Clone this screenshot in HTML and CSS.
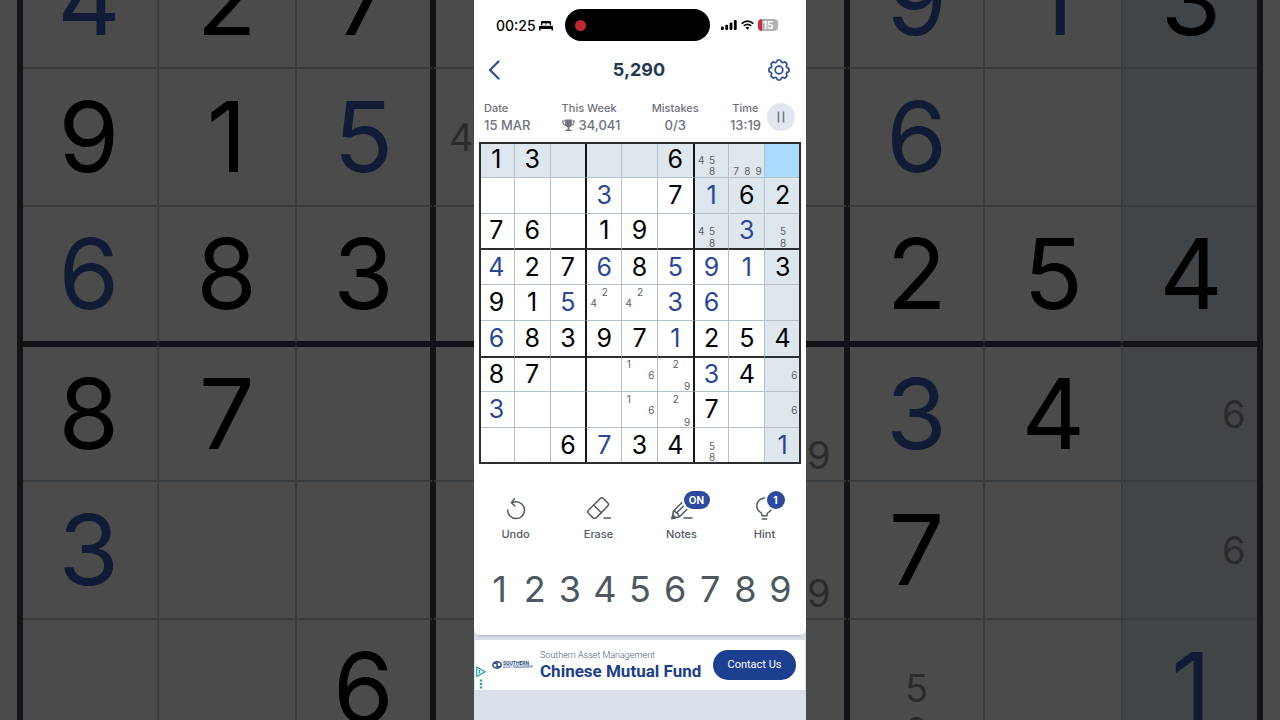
FILE: index.html
```html
<!DOCTYPE html>
<html lang="en">
<head>
    <meta charset="UTF-8">
    <meta name="viewport" content="width=device-width, initial-scale=1.0">
    <title>Sudoku</title>
    <link rel="stylesheet" href="styles.css">
</head>
<body>
    <div class="backdrop" aria-hidden="true">
        <div class="board board-dim" id="backdrop-board"></div>
    </div>

    <main class="phone">
        <div class="screen">
            <div class="status-bar">
                <div class="clock">
                    <span>00:25</span>
                    <svg width="14" height="11" viewBox="0 0 14 11">
                        <path d="M2 5V2.200Q2 1 3.200 1h7.600Q12 1 12 2.200V5h-1.300V4q0-.8-.8-.8H8q-.7 0-.7.8v1h-.6V4q0-.8-.7-.8H4.100q-.8 0-.8.8v1zM0 10.500V7q0-1.300 1.300-1.300h11.400Q14 5.700 14 7v3.500h-1.500V9h-11v1.500z"/>
                    </svg>
                </div>
                <div class="island"><span class="rec-dot"></span></div>
                <div class="signals">
                    <svg width="16" height="10" viewBox="0 0 16 10">
                        <rect x="0" y="6.500" width="2.800" height="3.500" rx="1"/>
                        <rect x="4.300" y="4.700" width="2.800" height="5.300" rx="1"/>
                        <rect x="8.600" y="2.500" width="2.800" height="7.500" rx="1"/>
                        <rect x="12.900" y="0" width="2.800" height="10" rx="1"/>
                    </svg>
                    <svg width="13" height="10" viewBox="0 0 13 10" fill="none" stroke="#000" stroke-width="1.800">
                        <path d="M.7 3.600Q6.500-1.400 12.300 3.600M2.800 5.900Q6.500 2.900 10.200 5.900"/>
                        <path d="M4.600 7.500Q6.500 6 8.400 7.500L6.500 9.700z" fill="#000" stroke="none"/>
                    </svg>
                    <span class="battery">15</span>
                </div>
            </div>

            <header class="nav">
                <button type="button" class="icon-btn" aria-label="Back">
                    <svg width="12" height="20" viewBox="0 0 12 20" fill="none" stroke="#2c4a98" stroke-width="2.200" stroke-linecap="round" stroke-linejoin="round">
                        <path d="M10.500 1.500L2 10l8.500 8.500"/>
                    </svg>
                </button>
                <h1 class="score">5,290</h1>
                <button type="button" class="icon-btn" aria-label="Settings">
                    <svg width="22" height="22" viewBox="-11 -11 22 22" fill="none" stroke="#2c4a98" stroke-width="1.700" stroke-linejoin="round">
                        <defs>
                            <path id="tooth" d="M-2.300-8Q-1.900-10-1.200-10H1.200Q1.900-10 2.300-8Q2.900-7.300 4.030-7.280"/>
                        </defs>
                        <use href="#tooth"/>
                        <use href="#tooth" transform="rotate(45)"/>
                        <use href="#tooth" transform="rotate(90)"/>
                        <use href="#tooth" transform="rotate(135)"/>
                        <use href="#tooth" transform="rotate(180)"/>
                        <use href="#tooth" transform="rotate(225)"/>
                        <use href="#tooth" transform="rotate(270)"/>
                        <use href="#tooth" transform="rotate(315)"/>
                        <circle r="3.800"/>
                    </svg>
                </button>
            </header>

            <section class="stats">
                <div class="stat stat-left">
                    <span>Date</span>
                    <span class="stat-value">15 MAR</span>
                </div>
                <div class="stat stat-left">
                    <span>This Week</span>
                    <span class="stat-value">
                        <svg width="13" height="13" viewBox="0 0 13 13" fill="#6e737d">
                            <path d="M3.200.5h6.600v4.500q0 2.800-2.500 3.400v2h1.500q1 .2 1 1.600H3.200q0-1.400 1-1.600h1.500v-2q-2.500-.6-2.500-3.400z"/>
                            <path d="M3.200 2H.8q0 3.600 3 4.300M9.800 2h2.400q0 3.600-3 4.300" fill="none" stroke="#6e737d" stroke-width="1.200"/>
                        </svg>
                        34,041
                    </span>
                </div>
                <div class="stat">
                    <span>Mistakes</span>
                    <span class="stat-value">0/3</span>
                </div>
                <div class="timer">
                    <div class="stat">
                        <span>Time</span>
                        <span class="stat-value">13:19</span>
                    </div>
                    <button type="button" class="pause" aria-label="Pause">
                        <svg width="8" height="12" viewBox="0 0 8 12" stroke="#737b89" stroke-width="1.600">
                            <path d="M1.500.5v11M6.500.5v11"/>
                        </svg>
                    </button>
                </div>
            </section>

            <div class="board" id="game-board"></div>

            <section class="tools">
                <button type="button" class="tool">
                    <span class="tool-icon">
                        <svg width="24" height="24" viewBox="0 0 24 24">
                            <path d="M3.700 13a8.400 8.400 0 1 0 8.400-8.200q-2.300 0-4.500.8M10.400 1.800L7.400 5.600l3.500 3.400"/>
                        </svg>
                    </span>
                    Undo
                </button>
                <button type="button" class="tool">
                    <span class="tool-icon">
                        <svg width="24" height="24" viewBox="0 0 24 24">
                            <g transform="rotate(-45 11 11)">
                                <rect x=".5" y="5.800" width="21" height="10.800" rx="2.500"/>
                                <path d="M10 5.800v10.800"/>
                            </g>
                            <path d="M17 21h6.500"/>
                        </svg>
                    </span>
                    Erase
                </button>
                <button type="button" class="tool">
                    <span class="tool-icon">
                        <svg width="24" height="24" viewBox="0 0 24 24">
                            <path d="M2 21.500L3.500 14 14.500 3M2 21.500l7.500-1.800L21 8.200M3.500 14q1.400-.2 1.900.9.300.9 1.500 1 1.100.1 1.200 1.400.2 1.300 1.400 2.400M7 15.500L18 4.500M14 21h8"/>
                            <path d="M2 21.500l1-3.500 2.500 2.700z" fill="#535b66"/>
                        </svg>
                        <span class="badge badge-on">ON</span>
                    </span>
                    Notes
                </button>
                <button type="button" class="tool">
                    <span class="tool-icon">
                        <svg width="24" height="24" viewBox="0 0 24 24">
                            <path d="M9 18.800v-1.300q0-1.200-1.800-2.300A7.700 7.700 0 1 1 15.800 15.200q-1.800 1.100-1.800 2.300v1.300zM9.300 22h4.400"/>
                        </svg>
                        <span class="badge badge-count">1</span>
                    </span>
                    Hint
                </button>
            </section>

            <section class="keypad" id="keypad"></section>
        </div>

        <aside class="ad">
            <div class="ad-marks">
                <svg width="10" height="24" viewBox="0 0 10 24" fill="none" stroke="#20a29b" stroke-width="1.200">
                    <path d="M.8 1v9.500L9 5.800zM3.500 4v3.500"/>
                    <path d="M5 13.500v2M5 17v2M5 20.500v2" stroke-width="2.400"/>
                </svg>
            </div>
            <div class="ad-logo">
                <svg width="10" height="8" viewBox="0 0 10 8" fill="none" stroke="#24407f" stroke-width="1.500">
                    <ellipse cx="5" cy="4" rx="4.200" ry="3.200"/>
                    <path d="M2 2.500Q6 1 5 4t3 1.500"/>
                </svg>
                <div class="ad-brand">
                    <span class="ad-brand-name">SOUTHERN</span>
                    <span class="ad-brand-sub">ASSET MANAGEMENT</span>
                </div>
            </div>
            <div class="ad-copy">
                <span class="ad-company">Southern Asset Management</span>
                <span class="ad-title">Chinese Mutual Fund</span>
            </div>
            <a class="ad-cta" href="#">Contact Us</a>
        </aside>
    </main>

    <script src="script.js"></script>
</body>
</html>
```

FILE: styles.css
```css
* {
    box-sizing: border-box;
}
body {
    margin: 0;
    height: 100vh;
    display: grid;
    grid-template: minmax(0, 1fr) / minmax(0, 1fr);
    overflow: hidden;
    background-color: #4b4b4b;
    font-family: Inter, "Liberation Sans", sans-serif;
    color: #000000;
}
button {
    padding: 0;
    border: none;
    background: none;
    font-family: inherit;
    color: inherit;
    cursor: pointer;
}
svg {
    display: block;
    flex: none;
}

/* Enlarged board behind the phone */
.backdrop {
    grid-area: 1 / 1;
    display: flex;
    align-items: flex-end;
    padding: 0 20px;
    overflow: hidden;
}
.board {
    display: grid;
    grid-template: repeat(9, minmax(0, 1fr)) / repeat(9, minmax(0, 1fr));
    aspect-ratio: 1;
    outline: 2px solid #2b2f33;
    outline-offset: -2px;
}
.cell {
    display: flex;
    align-items: center;
    justify-content: center;
    width: 100%;
    border: 0 solid #b4c0cb;
    border-right-width: 1px;
    border-bottom-width: 1px;
    background-color: #ffffff;
    font-size: 25px;
    line-height: 1;
}
/* box lines are split between the two cells that share them */
.cell.box-left {
    border-left: 1px solid #16191c;
}
.cell.box-right {
    border-right: 1px solid #16191c;
}
.cell.box-top {
    border-top: 1px solid #2b2f33;
}
.cell.box-bottom {
    border-bottom: 1px solid #2b2f33;
}
.cell.entered {
    color: #2a4699;
}
.cell.peer {
    background-color: #dee6ee;
}
.cell.selected {
    background-color: #a9dcfc;
}
.notes {
    display: grid;
    grid-template: repeat(3, 1fr) / repeat(3, 1fr);
    place-items: center;
    width: 100%;
    height: 100%;
    padding: 1px 0 0 1px;
    font-size: 10px;
    line-height: 1;
    color: #5c6066;
}
.board-dim {
    flex: 1;
    margin-bottom: -37px;
    outline: 6px solid #121316;
    outline-offset: -3px;
}
.board-dim .cell {
    border: 1px solid #393c3f;
    background-color: #4b4b4b;
    font-size: 98px;
}
.board-dim .cell.box-left {
    border-left: 3px solid #121316;
}
.board-dim .cell.box-right {
    border-right: 3px solid #121316;
}
.board-dim .cell.box-top {
    border-top: 3px solid #121316;
}
.board-dim .cell.box-bottom {
    border-bottom: 3px solid #121316;
}
.board-dim .cell.entered {
    color: #111b35;
}
.board-dim .cell.peer {
    background-color: #414548;
}
.board-dim .notes {
    padding: 4px;
    font-size: 38px;
    color: #2a2b2d;
}

/* Phone */
.phone {
    grid-area: 1 / 1;
    justify-self: center;
    display: flex;
    flex-direction: column;
    gap: 5px;
    width: 100%;
    max-width: 332px;
    background-color: #d9e0e9;
}
.screen {
    padding-bottom: 24px;
    border-radius: 0 0 6px 6px;
    background-color: #ffffff;
    box-shadow: 0 4px 4px -4px #8d97a5;
}
.status-bar {
    display: grid;
    grid-template-columns: 1fr auto 1fr;
    align-items: center;
    height: 50px;
    padding: 0 28px 0 22px;
}
.clock {
    display: flex;
    align-items: center;
    gap: 3px;
    font-size: 14px;
    font-weight: 500;
}
.island {
    display: flex;
    align-items: center;
    width: 145px;
    height: 32px;
    padding: 0 10px;
    border-radius: 16px;
    background-color: #000000;
}
.rec-dot {
    width: 11px;
    height: 11px;
    border-radius: 50%;
    background-color: #c1272d;
}
.signals {
    display: flex;
    align-items: center;
    justify-content: flex-end;
    gap: 4px;
}
.battery {
    width: 20px;
    border-radius: 4px;
    background: linear-gradient(to right, #d12b37 4px, #b1b1b1 4px);
    color: #ffffff;
    font-size: 10px;
    font-weight: 700;
    line-height: 12px;
    text-align: center;
}
.nav {
    display: flex;
    align-items: center;
    justify-content: space-between;
    height: 40px;
    padding: 0 16px 0 14px;
}
.icon-btn {
    display: flex;
    width: 22px;
}
.score {
    margin: 0;
    font-size: 18px;
    font-weight: 700;
    line-height: 20px;
    color: #243c50;
}
.stats {
    display: flex;
    justify-content: space-between;
    padding: 10px 11px 8px 10px;
    color: #6e737d;
}
.stat {
    display: flex;
    flex-direction: column;
    align-items: center;
    font-size: 11px;
    font-weight: 500;
    line-height: 17px;
}
.stat-left {
    align-items: flex-start;
}
.stat-value {
    display: flex;
    align-items: center;
    gap: 4px;
    font-size: 13px;
}
.timer {
    display: flex;
    align-items: center;
    gap: 6px;
}
.pause {
    display: flex;
    align-items: center;
    justify-content: center;
    width: 28px;
    height: 28px;
    border-radius: 50%;
    background-color: #e2e6ee;
}
.phone .board {
    margin: 0 5px;
}
.tools {
    display: grid;
    grid-template-columns: repeat(4, 1fr);
    padding-top: 33px;
}
.tool {
    display: flex;
    flex-direction: column;
    align-items: center;
    gap: 5px;
    font-size: 11px;
    font-weight: 500;
    line-height: 16px;
    color: #535b66;
}
.tool-icon {
    position: relative;
}
.tool-icon svg {
    fill: none;
    stroke: #535b66;
    stroke-width: 1.5px;
    stroke-linecap: round;
    stroke-linejoin: round;
}
.badge {
    position: absolute;
    top: -6px;
    left: 14px;
    height: 18px;
    border-radius: 9px;
    background-color: #2c4a9e;
    box-shadow: 0 0 0 2px #ffffff;
    color: #ffffff;
    font-size: 10px;
    font-weight: 700;
    line-height: 18px;
    text-align: center;
}
.badge-on {
    width: 26px;
}
.badge-count {
    width: 18px;
}
.keypad {
    display: grid;
    grid-template-columns: repeat(9, 1fr);
    padding: 25px 8px 0;
}
.key {
    font-size: 36px;
    line-height: 44px;
    color: #4d5860;
}

/* Banner */
.ad {
    display: flex;
    align-items: center;
    height: 50px;
    margin: 0 1px;
    padding-right: 9px;
    background-color: #ffffff;
    font-family: Roboto, "Liberation Sans", sans-serif;
    color: #1d3f8a;
}
.ad-marks {
    align-self: flex-end;
    width: 17px;
    padding: 0 1px;
}
.ad-logo {
    display: flex;
    align-items: center;
    gap: 1px;
    width: 48px;
}
.ad-brand {
    display: flex;
    flex-direction: column;
    font-weight: 700;
    line-height: 1;
    white-space: nowrap;
}
.ad-brand-name {
    font-size: 5px;
}
.ad-brand-sub {
    font-size: 3px;
    font-weight: 400;
}
.ad-copy {
    display: flex;
    flex: 1;
    flex-direction: column;
    white-space: nowrap;
}
.ad-company {
    font-size: 9px;
    font-weight: 300;
    line-height: 12px;
    color: #4d5a7a;
}
.ad-title {
    font-size: 17px;
    font-weight: 700;
    line-height: 20px;
}
.ad-cta {
    width: 83px;
    border-radius: 15px;
    background-color: #1d3f8f;
    color: #ffffff;
    font-size: 11px;
    line-height: 30px;
    text-align: center;
    text-decoration: none;
}
```

FILE: script.js
```js
// digit = given, "=digit" = entered by the player, "n..." = pencil notes
const rows = [
    ['1', '3', '', '', '', '6', 'n458', 'n789', ''],
    ['', '', '', '=3', '', '7', '=1', '6', '2'],
    ['7', '6', '', '1', '9', '', 'n458', '=3', 'n58'],
    ['=4', '2', '7', '=6', '8', '=5', '=9', '=1', '3'],
    ['9', '1', '=5', 'n24', 'n24', '=3', '=6', '', ''],
    ['=6', '8', '3', '9', '7', '=1', '2', '5', '4'],
    ['8', '7', '', '', 'n16', 'n29', '=3', '4', 'n6'],
    ['=3', '', '', '', 'n16', 'n29', '7', '', 'n6'],
    ['', '', '6', '=7', '3', '4', 'n58', '', '=1']
];
const selected = { row: 0, col: 8 };

// the phone covers the middle box column, only notes at its outer edges peek out
const backdropRows = rows.map((row, r) => row.map((value, c) => {
    if (r < 3) return '';
    if (c < 3 || c > 5) return value;
    if (value[0] !== 'n' || c === 4) return '';
    return 'n' + value.slice(1).split('').filter(n => n % 3 === (c === 3 ? 1 : 0)).join('');
}));

function drawBoard(board, tag, data) {
    data.forEach((row, r) => {
        row.forEach((value, c) => {
            const cell = document.createElement(tag);
            const sameBox = Math.floor(r / 3) === Math.floor(selected.row / 3) &&
                Math.floor(c / 3) === Math.floor(selected.col / 3);

            cell.className = 'cell';
            if (tag === 'button') {
                cell.type = 'button';
                cell.setAttribute('aria-label', 'Row ' + (r + 1) + ', column ' + (c + 1));
            }
            if (r === 3 || r === 6) cell.classList.add('box-top');
            if (r === 2 || r === 5) cell.classList.add('box-bottom');
            if (c === 3 || c === 6) cell.classList.add('box-left');
            if (c === 2 || c === 5) cell.classList.add('box-right');
            if (r === selected.row && c === selected.col) {
                cell.classList.add('selected');
            } else if (r === selected.row || c === selected.col || sameBox) {
                cell.classList.add('peer');
            }

            if (value[0] === 'n') {
                const notes = document.createElement('span');
                notes.className = 'notes';
                for (let n = 1; n <= 9; n++) {
                    const note = document.createElement('span');
                    note.textContent = value.includes(n) ? n : '';
                    notes.appendChild(note);
                }
                cell.appendChild(notes);
            } else if (value[0] === '=') {
                cell.classList.add('entered');
                cell.textContent = value[1];
            } else {
                cell.textContent = value;
            }
            board.appendChild(cell);
        });
    });
}

drawBoard(document.getElementById('backdrop-board'), 'div', backdropRows);
drawBoard(document.getElementById('game-board'), 'button', rows);

for (let n = 1; n <= 9; n++) {
    const key = document.createElement('button');
    key.type = 'button';
    key.className = 'key';
    key.textContent = n;
    document.getElementById('keypad').appendChild(key);
}
```
